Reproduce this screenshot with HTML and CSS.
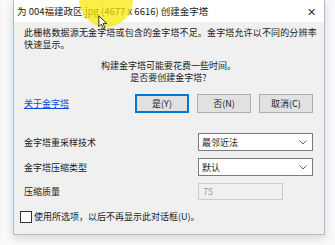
FILE: index.html
```html
<!DOCTYPE html>
<html lang="zh">
<head>
<meta charset="utf-8">
<link rel="stylesheet" href="styles.css">
</head>
<body>
<div class="dialog">
  <div class="titlebar">
    <span class="title">为 004福建政区.jpg (4677 x 6616) 创建金字塔</span>
    <span class="close">✕</span>
  </div>
  <div class="content">
    <p class="msg">此栅格数据源无金字塔或包含的金字塔不足。金字塔允许以不同的分辨率<br>快速显示。</p>
    <p class="ask">构建金字塔可能要花费一些时间。<br>是否要创建金字塔?</p>
    <div class="actions">
      <a class="link">关于金字塔</a>
      <div class="buttons">
        <button class="btn default">是(Y)</button>
        <button class="btn">否(N)</button>
        <button class="btn">取消(C)</button>
      </div>
    </div>
    <div class="form">
      <div class="row">
        <span class="label">金字塔重采样技术</span>
        <div class="select"><span>最邻近法</span><svg class="chev" width="8" height="5" viewBox="0 0 8 5"><path d="M0.5 0.5 L4 4 L7.5 0.5" fill="none" stroke="#666" stroke-width="1"/></svg></div>
      </div>
      <div class="row">
        <span class="label">金字塔压缩类型</span>
        <div class="select"><span>默认</span><svg class="chev" width="8" height="5" viewBox="0 0 8 5"><path d="M0.5 0.5 L4 4 L7.5 0.5" fill="none" stroke="#666" stroke-width="1"/></svg></div>
      </div>
      <div class="row">
        <span class="label">压缩质量</span>
        <div class="input disabled">75</div>
      </div>
    </div>
    <label class="check"><span class="box"></span>使用所选项，以后不再显示此对话框(U)。</label>
  </div>
  <div class="spot"></div>
  <svg class="cursor" width="10" height="15" viewBox="0 0 12 18"><path d="M1 1 L1 14 L4 11 L6.5 16.5 L8.5 15.5 L6 10.3 L10.5 10.3 Z" fill="#fff" stroke="#222" stroke-width="1.1"/></svg>
</div>
</body>
</html>
```
FILE: styles.css
```css
html, body { margin: 0; padding: 0; }
body {
  width: 335px;
  height: 245px;
  background: #f9f9f9;
  font-family: "Noto Sans CJK SC", "Noto Sans", sans-serif;
  font-size: 9px;
  color: #1a1a1a;
  overflow: hidden;
}
.dialog {
  position: relative;
  margin-left: 13px;
  width: 312px;
  height: 235px;
  box-sizing: border-box;
  border: 1px solid #a9bdd3;
  border-top: none;
  background: #f0f0f0;
  box-shadow: 0 3px 8px rgba(0,0,0,0.15);
}
.titlebar {
  height: 22px;
  background: #fff;
  display: flex;
  align-items: center;
  justify-content: space-between;
  padding: 0 8px 0 3px;
}
.title { font-size: 9.5px; color: #222; }
.close { font-size: 11px; color: #333; }
.content { padding: 5px 11px 0 10px; }
.msg { margin: 0; line-height: 12px; white-space: nowrap; letter-spacing: 0.15px; }
.ask { margin: 9px 0 0; text-align: center; line-height: 12px; }
.actions {
  display: flex;
  align-items: center;
  justify-content: space-between;
  margin-top: 10px;
}
.link { color: #0b4ad6; text-decoration: underline; }
.buttons { display: flex; gap: 8px; }
.btn {
  width: 54px;
  height: 19px;
  box-sizing: border-box;
  background: #e1e1e1;
  border: 1px solid #adadad;
  font-family: inherit;
  font-size: 9px;
  color: #222;
  padding: 0;
}
.btn.default { border: 2px solid #0078d7; }
.form { margin-top: 20px; display: flex; flex-direction: column; gap: 7px; }
.row { display: flex; align-items: center; justify-content: space-between; }
.select {
  width: 115px;
  height: 18px;
  box-sizing: border-box;
  border: 1px solid #7a7a7a;
  background: #fff;
  display: flex;
  align-items: center;
  justify-content: space-between;
  padding: 0 5px 0 3px;
}
.input {
  width: 85px;
  height: 17px;
  box-sizing: border-box;
  margin-right: 30px;
  display: flex;
  align-items: center;
  padding-left: 4px;
}
.input.disabled { border: 1px solid #cccccc; color: #9a9a9a; background: #f0f0f0; }
.check { display: flex; align-items: center; gap: 2px; margin: 10px 0 0 -4px; }
.box {
  width: 10px;
  height: 10px;
  border: 1px solid #333;
  background: #fff;
}
.spot {
  position: absolute;
  left: 65px;
  top: -27px;
  width: 54px;
  height: 54px;
  border-radius: 50%;
  background: rgba(250, 232, 0, 0.72);
}
.cursor { position: absolute; left: 84px; top: 15px; }
```
